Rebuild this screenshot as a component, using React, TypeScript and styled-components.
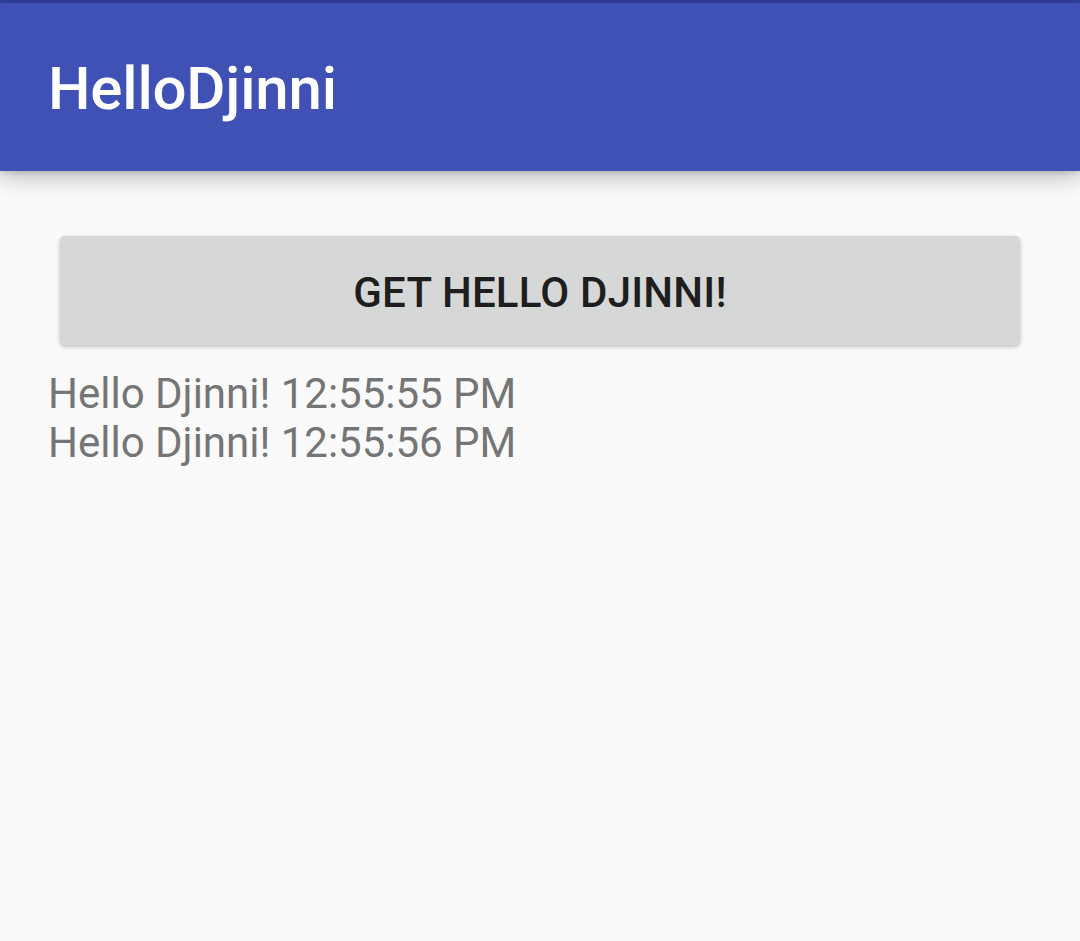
import React from "react";
import styled, { createGlobalStyle } from "styled-components";

const Global = createGlobalStyle`
  html, body { margin: 0; padding: 0; background: #fafafa; }
  body { font-family: Roboto, "Noto Sans", sans-serif; }
`;

const Screen = styled.div`
  width: 1080px;
  height: 941px;
  background: #fafafa;
  display: flex;
  flex-direction: column;
  overflow: hidden;
`;

const StatusStrip = styled.div`
  height: 3px;
  background: #303f9f;
`;

const AppBar = styled.header`
  height: 168px;
  background: #3f51b5;
  display: flex;
  align-items: center;
  padding: 0 48px;
  box-shadow: 0 8px 20px rgba(0, 0, 0, 0.22), 0 2px 5px rgba(0, 0, 0, 0.12);
  position: relative;
  z-index: 1;
`;

const Title = styled.h1`
  margin: 0;
  padding-top: 3px;
  font-family: Roboto, sans-serif;
  font-weight: 500;
  font-size: 60px;
  color: #ffffff;
  letter-spacing: -0.2px;
`;

const Content = styled.main`
  display: flex;
  flex-direction: column;
  padding: 65px 48px 0 48px;
`;

const Button = styled.button`
  margin: 0 12px;
  height: 109px;
  padding: 3px 0 0 0;
  border: none;
  border-radius: 5px;
  background: #d6d7d7;
  box-shadow: 0 2px 4px rgba(0, 0, 0, 0.22), 0 0 2px rgba(0, 0, 0, 0.08);
  font-family: Roboto, sans-serif;
  font-weight: 500;
  font-size: 42px;
  color: #1e1e1e;
  letter-spacing: 0.2px;
  text-transform: uppercase;
  display: flex;
  align-items: center;
  justify-content: center;
  cursor: pointer;
`;

const Log = styled.div`
  margin-top: 24px;
  display: flex;
  flex-direction: column;
`;

const Line = styled.div`
  font-family: Roboto, sans-serif;
  font-size: 42px;
  line-height: 49px;
  color: #757575;
`;

const lines = ["Hello Djinni! 12:55:55 PM", "Hello Djinni! 12:55:56 PM"];

export default function App() {
  return (
    <Screen>
      <Global />
      <StatusStrip />
      <AppBar>
        <Title>HelloDjinni</Title>
      </AppBar>
      <Content>
        <Button>Get Hello Djinni!</Button>
        <Log>
          {lines.map((l) => (
            <Line key={l}>{l}</Line>
          ))}
        </Log>
      </Content>
    </Screen>
  );
}
